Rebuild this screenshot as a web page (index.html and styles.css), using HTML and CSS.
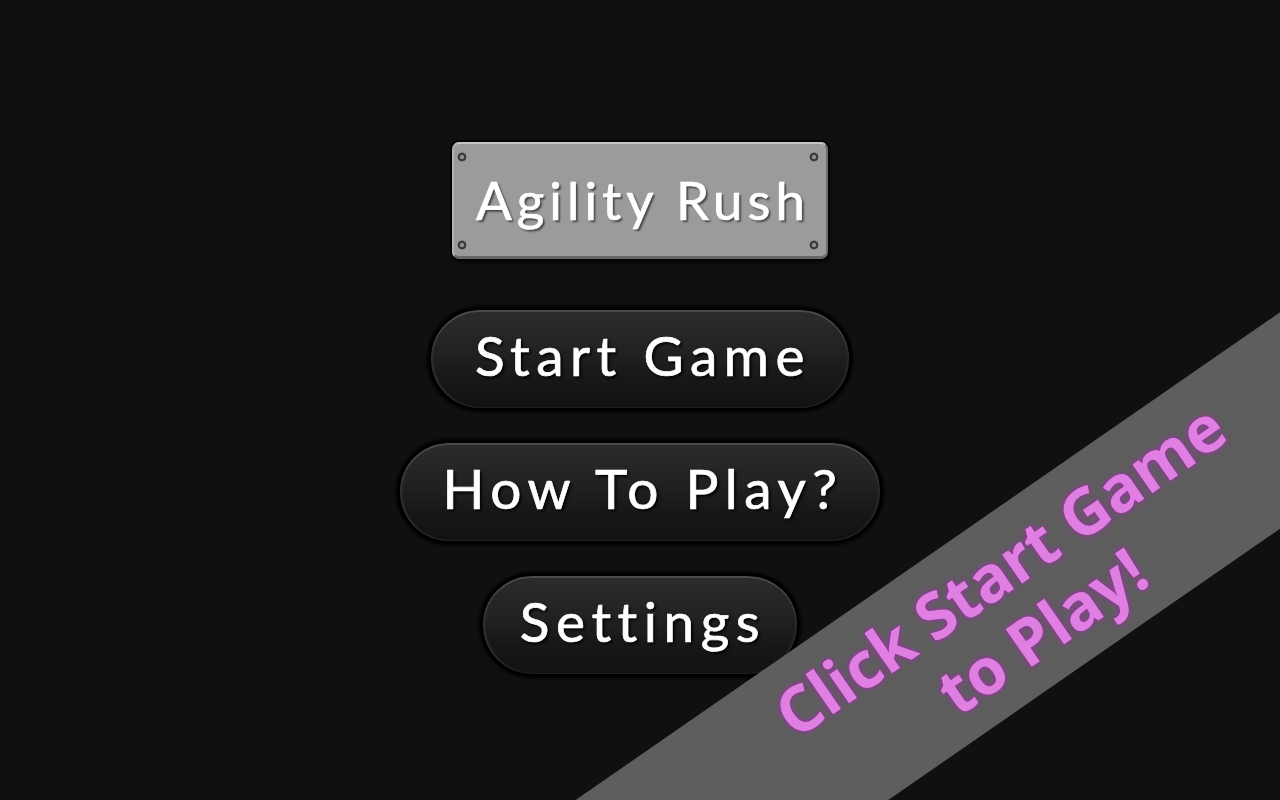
FILE: index.html
```html
<!DOCTYPE html>
<html lang="en">
<head>
<meta charset="utf-8">
<title>Agility Rush</title>
<link rel="stylesheet" href="styles.css">
</head>
<body>
<div class="stage">
  <main class="menu">
    <h1 class="plate">Agility Rush</h1>
    <button class="btn btn-start">Start Game</button>
    <button class="btn btn-help">How To Play?</button>
    <button class="btn btn-settings">Settings</button>
  </main>
  <div class="ribbon">
    <p class="ribbon-text">Click Start Game<br>to Play!</p>
  </div>
</div>
</body>
</html>
```

FILE: styles.css
```css
html, body {
  margin: 0;
  padding: 0;
  background: #101010;
}

.stage {
  position: relative;
  width: 1280px;
  height: 800px;
  overflow: hidden;
  background: #101010;
}

.menu {
  display: flex;
  flex-direction: column;
  align-items: center;
  padding-top: 142px;
  gap: 29px;
}

/* Riveted metal title plate */
.plate {
  box-sizing: border-box;
  width: 376px;
  height: 117px;
  margin: 0 0 19px 0;
  display: flex;
  align-items: center;
  justify-content: center;
  padding: 0 0 2px 6px;
  border-radius: 7px;
  border-top: 2px solid #c4c4c4;
  border-left: 2px solid #b0b0b0;
  border-right: 2px solid #6e6e6e;
  border-bottom: 3px solid #666;
  background-color: #9b9b9b;
  background-image:
    radial-gradient(circle, #8f8f8f 0 1.8px, #3a3a3a 2.6px 4px, rgba(0,0,0,0) 4.8px),
    radial-gradient(circle, #8f8f8f 0 1.8px, #3a3a3a 2.6px 4px, rgba(0,0,0,0) 4.8px),
    radial-gradient(circle, #8f8f8f 0 1.8px, #3a3a3a 2.6px 4px, rgba(0,0,0,0) 4.8px),
    radial-gradient(circle, #8f8f8f 0 1.8px, #3a3a3a 2.6px 4px, rgba(0,0,0,0) 4.8px);
  background-size: 12px 12px;
  background-repeat: no-repeat;
  background-position: 2px 7px, 354px 7px, 2px 95px, 354px 95px;
  box-shadow: 0 0 0 2px #050505, 2px 3px 4px rgba(0,0,0,0.8);
  font-family: Lato, "Liberation Sans", sans-serif;
  font-weight: 400;
  font-size: 53px;
  letter-spacing: 5px;
  color: #fff;
  -webkit-text-stroke: 0.7px #fff;
  text-shadow: 2px 2px 2px rgba(40,40,40,0.75);
}

/* Glossy black pill buttons */
.btn {
  box-sizing: border-box;
  height: 104px;
  padding: 0 0 8px 6px;
  border: 3px solid #000;
  border-radius: 52px;
  background: linear-gradient(#2c2c2c 0%, #222 40%, #161616 75%, #121212 100%);
  box-shadow:
    inset 0 2px 0 #4a4a4a,
    inset 2px 0 2px #333,
    inset -2px 0 2px #2a2a2a,
    0 0 3px 1px #000;
  color: #fff;
  font-family: Lato, "Liberation Sans", sans-serif;
  font-weight: 400;
  font-size: 55px;
  letter-spacing: 6.5px;
  -webkit-text-stroke: 0.7px #fff;
  text-shadow: 2px 2px 3px #000;
  cursor: pointer;
}

.btn-start { width: 424px; }
.btn-help { width: 486px; }
.btn-settings { width: 320px; }

/* Diagonal hint banner across the corner */
.ribbon {
  position: absolute;
  left: 328px;
  top: 506px;
  width: 1400px;
  height: 178px;
  transform: rotate(-34.7deg);
  background: #5e5e5e;
  display: flex;
  align-items: center;
  justify-content: center;
}

.ribbon-text {
  margin: 0 0 0 -18px;
  text-align: center;
  font-family: "Open Sans", "Noto Sans", sans-serif;
  font-weight: 700;
  font-size: 64px;
  line-height: 74px;
  color: #e07fe2;
  text-shadow: 0 0 3px #9a2aa6, 0 0 7px rgba(170, 50, 180, 0.7);
}
```
